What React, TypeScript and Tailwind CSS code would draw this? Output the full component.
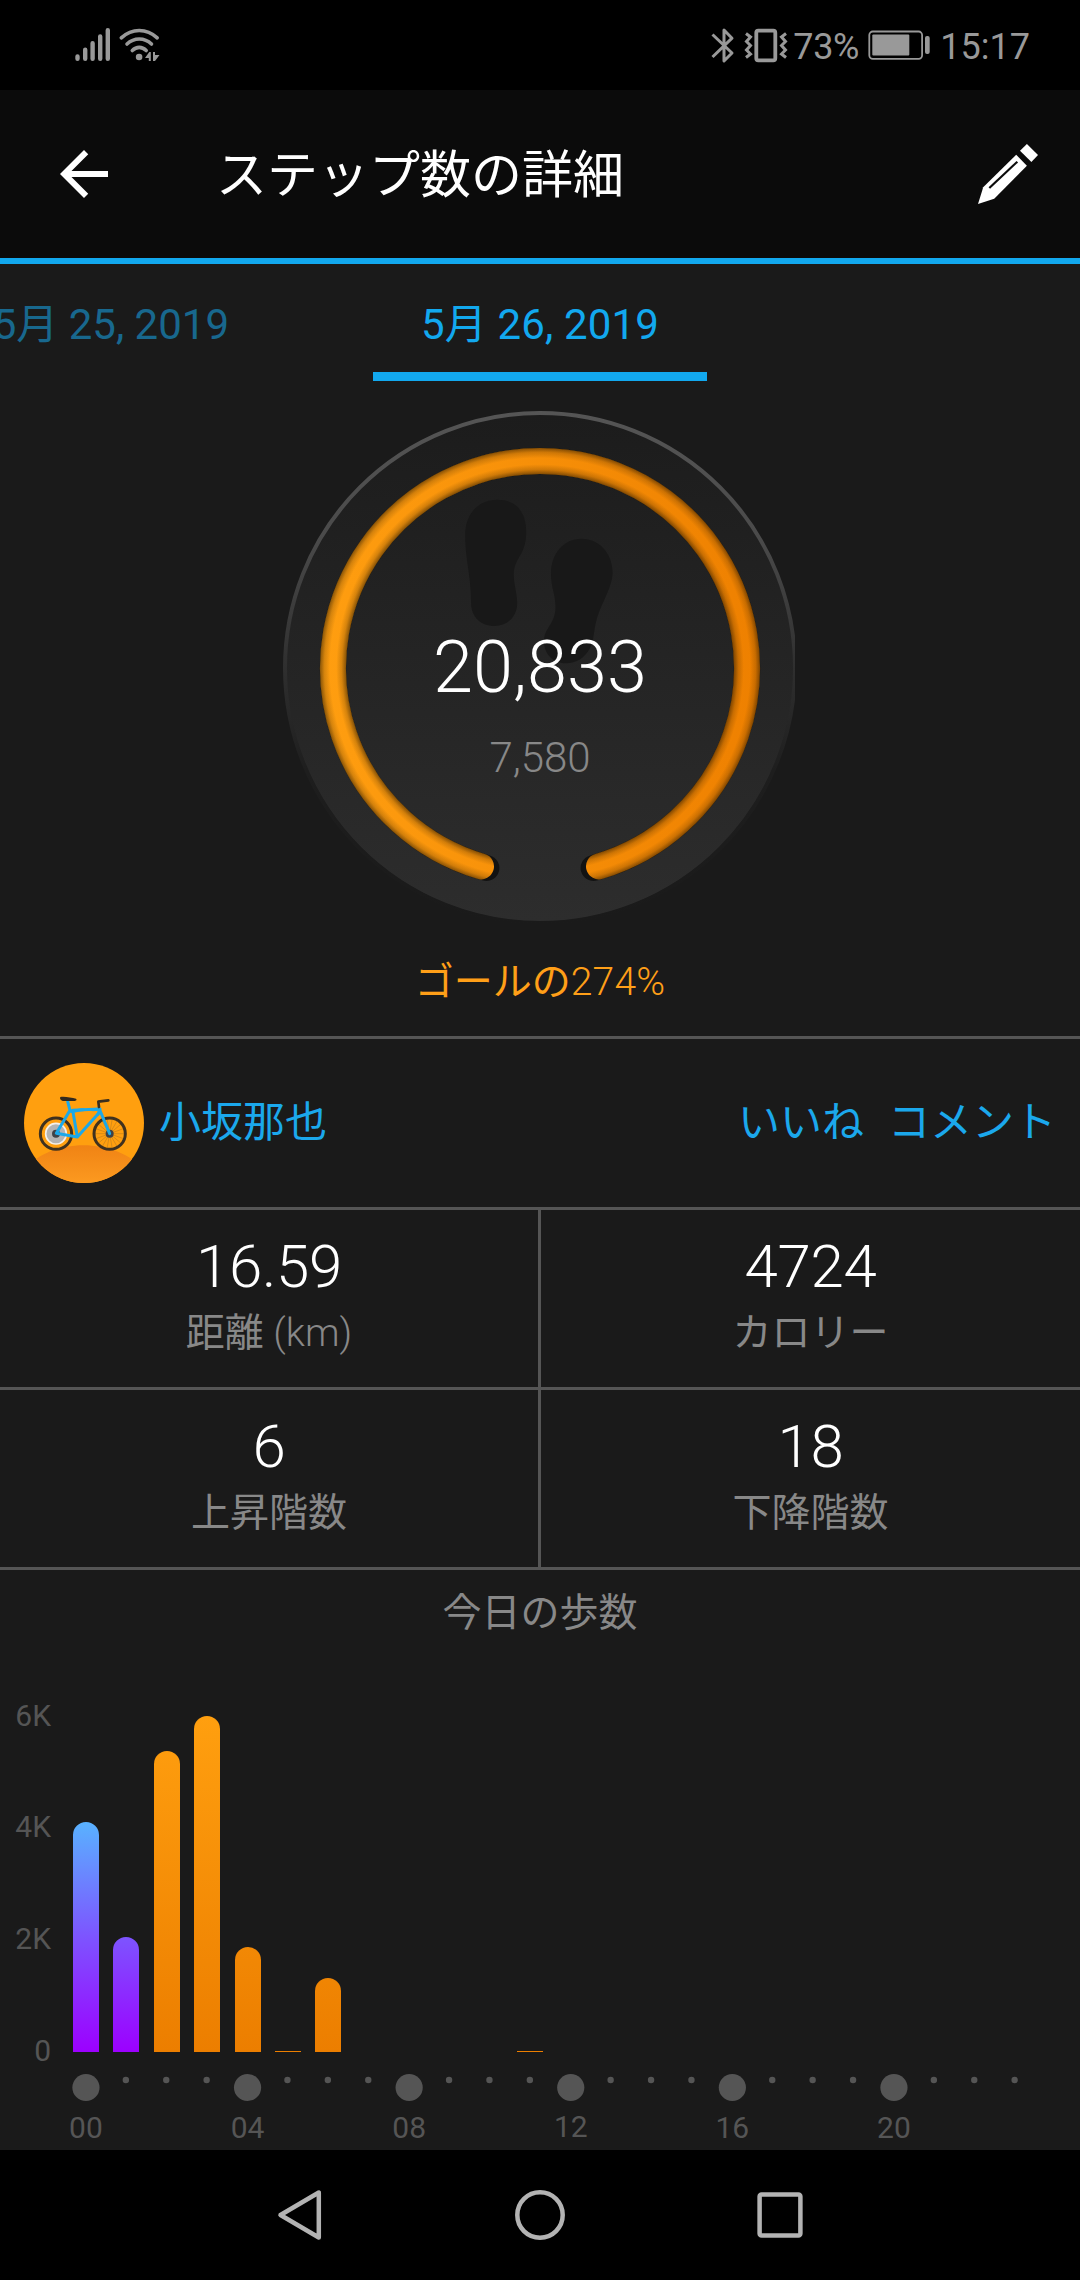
const STEPS_PER_PX = 6000 / 336;
const BASELINE = 2052;
const FIRST_X = 85.95;
const PITCH = 40.4;

const bars = [
  { hour: 0, steps: 4107, night: true },
  { hour: 1, steps: 2054, night: true },
  { hour: 2, steps: 5375, night: false },
  { hour: 3, steps: 6000, night: false },
  { hour: 4, steps: 1875, night: false },
  { hour: 5, steps: 18, night: false },
  { hour: 6, steps: 1321, night: false },
  { hour: 11, steps: 18, night: false },
];

function barPath(hour: number, steps: number) {
  const x = Math.round(FIRST_X + hour * PITCH - 13);
  const h = steps / STEPS_PER_PX;
  const top = BASELINE - h;
  const r = Math.min(13, h / 2);
  if (h < 4) return `M${x} ${BASELINE}V${top}H${x + 26}V${BASELINE}Z`;
  return `M${x} ${BASELINE}V${top + r}A13 ${r} 0 0 1 ${x + 26} ${top + r}V${BASELINE}Z`;
}

function StatusBar() {
  return (
    <div className="flex h-[90px] items-center bg-black pr-[50px] pl-[75px] text-[#999]">
      <svg width="86" height="40" viewBox="75 25 86 40" fill="none" stroke="currentColor" strokeLinecap="round">
        <g strokeWidth="4.400">
          <path d="M77.500 56.400V58.800M85.200 49.800V58.800M92.600 43.200V58.800M100.200 36.400V58.800M107.800 30.200V58.800" />
        </g>
        <g strokeWidth="3.600">
          <path d="M121.300 37.800C132 28 146.500 28 157.200 37.800" />
          <path d="M127 44C134 37.300 144.500 37.300 151.500 44" />
          <path d="M132.300 50.500C136.500 46.300 142 46.300 146.200 50.500" />
        </g>
        <circle cx="139.100" cy="57" r="3.300" fill="currentColor" stroke="none" />
        <path d="M145 58L149.300 52H150.800V61H148.800V58ZM153 61V52H155V55H159.500L155 61Z" fill="currentColor" stroke="none" />
      </svg>
      <div className="flex-1" />
      <svg width="77" height="40" viewBox="711 25 77 40" fill="none" stroke="currentColor">
        <path d="M712.500 34.500L732 53L724 61V30L732 38.200L712.500 57" strokeWidth="3" strokeLinejoin="round" />
        <rect x="756.300" y="30.700" width="19" height="29.600" rx="2" strokeWidth="3.800" />
        <path d="M746 33.500L750.500 37L746.500 41.500L750.500 45.500L746.500 50L750.500 54L746 57.500M786 33.500L781.500 37L785.500 41.500L781.500 45.500L785.500 50L781.500 54L786 57.500" strokeWidth="3" />
      </svg>
      <span className="ml-[5px] w-[67px] pt-[4px] text-[36px] leading-[40px] tracking-[-0.4px]">73%</span>
      <svg className="ml-[8px]" width="63" height="40" viewBox="868 25.500 63 40" fill="none" stroke="currentColor">
        <rect x="869.300" y="32" width="52.800" height="27.300" rx="3.500" strokeWidth="1.800" />
        <rect x="872.300" y="35" width="37" height="21" rx="1" fill="currentColor" stroke="none" />
        <rect x="925" y="36.500" width="4.700" height="18" rx="2" fill="currentColor" stroke="none" />
      </svg>
      <span className="ml-[9px] pt-[4px] text-[36px] leading-[40px]">15:17</span>
    </div>
  );
}

function Header() {
  return (
    <header className="flex h-[174px] items-center border-b-[6px] border-[#12a8ee] bg-[#0b0b0b] pr-[42px] pl-12 text-white">
      <svg width="72" height="72" viewBox="0 0 24 24" fill="currentColor">
        <path d="M20 11H7.830l5.590-5.590L12 4l-8 8 8 8 1.410-1.410L7.830 13H20v-2z" />
      </svg>
      <h1 className="ml-[96px] flex-1 pt-[3px] text-[51px] leading-[60px]">ステップ数の詳細</h1>
      <svg width="60" height="60" viewBox="978 144 60 60" fill="currentColor">
        <path d="M1026.900 144L1038 155L1031.400 162L1020 150.700Z" />
        <path d="M1016.200 154.700L1026.900 165.700L994.200 198.700L978 204L983.200 187.300Z" />
        <path d="M989.300 188L1017.300 161.700" stroke="#0b0b0b" strokeWidth="2.200" />
      </svg>
    </header>
  );
}

function DateTabs() {
  return (
    <nav className="grid h-[117px] grid-cols-[373px_334px_373px] text-[42px] leading-[60px] whitespace-nowrap text-[#12a8ee]">
      <div className="flex h-[108px] items-center justify-end pt-[14px] pr-[144px] text-[#18688e]">
        <span>5月 25, 2019</span>
      </div>
      <div className="flex h-[117px] items-center justify-center border-b-[9px] border-[#12a8ee] pt-[14px]">
        <span className="tracking-[0.15px]">5月 26, 2019</span>
      </div>
    </nav>
  );
}

function Gauge() {
  const arc = "M599 866.400A207 207 0 1 0 481 866.400";
  return (
    <section className="flex h-[655px] flex-col items-center pt-[27px]">
      <div className="grid h-[520px] w-[520px]">
        <svg className="col-start-1 row-start-1" width="520" height="520" viewBox="280 408 520 520" fill="none">
          <defs>
            <clipPath id="dial">
              <rect x="280" y="408" width="515" height="520" />
            </clipPath>
            <linearGradient id="disc" x1="0" y1="0" x2="0" y2="1">
              <stop offset="0" stopColor="#1c1c1c" />
              <stop offset="1" stopColor="#2d2d2d" />
            </linearGradient>
            <linearGradient id="rim" x1="0" y1="411" x2="0" y2="925" gradientUnits="userSpaceOnUse">
              <stop offset="0" stopColor="#555" />
              <stop offset="0.250" stopColor="#4a4a4a" />
              <stop offset="0.500" stopColor="#2f2f2f" />
              <stop offset="0.700" stopColor="#1e1e1e" />
              <stop offset="1" stopColor="#1a1a1a" />
            </linearGradient>
            <linearGradient id="ring" x1="320" y1="0" x2="760" y2="0" gradientUnits="userSpaceOnUse">
              <stop offset="0" stopColor="#ff9e10" />
              <stop offset="1" stopColor="#ee8000" />
            </linearGradient>
            <radialGradient id="shade" cx="540" cy="668" r="220.500" gradientUnits="userSpaceOnUse">
              <stop offset="0.878" stopColor="#1a1000" stopOpacity="0.550" />
              <stop offset="0.900" stopColor="#1a1000" stopOpacity="0.180" />
              <stop offset="0.924" stopColor="#1a1000" stopOpacity="0" />
              <stop offset="0.952" stopColor="#1a1000" stopOpacity="0" />
              <stop offset="0.978" stopColor="#1a1000" stopOpacity="0.180" />
              <stop offset="1" stopColor="#1a1000" stopOpacity="0.550" />
            </radialGradient>
          </defs>
          <g clipPath="url(#dial)">
            <circle cx="540" cy="668" r="253.500" fill="url(#disc)" />
            <circle cx="540" cy="668" r="255" stroke="url(#rim)" strokeWidth="4" />
          </g>
          <path d="M593.600 868A207 207 0 1 0 486.400 868" stroke="#121212" strokeWidth="26" strokeLinecap="round" />
          <path d={arc} stroke="url(#ring)" strokeWidth="26" strokeLinecap="round" />
          <path d={arc} stroke="url(#shade)" strokeWidth="26.500" strokeLinecap="round" />
          <g fill="#181818">
            <path d="M497.300 499.700C516 499.700 526.200 512 526.200 532C526.200 556 513.800 557 513.800 575C513.800 585 517.200 593 517.200 603C517.200 617 507 626 494.500 626C481 626 471.100 617 471.100 603C471.100 575 465.200 560 465.200 535C465.200 513 479 499.700 497.300 499.700Z" />
            <path d="M581.600 538.700C599 538.700 612.600 553 612.600 573C612.600 586 602 602 597 618C593 632 594.500 640 590 648C585 658 576 663.300 566 663.300C553 663.300 544 654 544 641C544 628 555.500 624 555.500 607C555.500 594 551 588 551 574C551 553 564 538.700 581.600 538.700Z" />
          </g>
        </svg>
        <div className="relative col-start-1 row-start-1 flex flex-col items-center pt-[224px] font-light">
          <span className="text-[72px] leading-[72px] tracking-[0.1px] text-white">20,833</span>
          <span className="mt-[33px] text-[42px] leading-[42px] text-[#888]">7,580</span>
        </div>
      </div>
      <p className="mt-[34px] text-[39px] leading-[40px] text-[#ff9f18]">
        ゴールの<span className="font-light tracking-[0.2px]">274%</span>
      </p>
    </section>
  );
}

function Avatar() {
  const spokes = Array.from({ length: 9 }, (_, i) => i * 20);
  return (
    <svg width="120" height="120" viewBox="72 98 360 360" fill="none">
      <defs>
        <clipPath id="avatar">
          <circle cx="252" cy="278" r="180" />
        </clipPath>
        <linearGradient id="hill" x1="0" y1="0" x2="0" y2="1">
          <stop offset="0" stopColor="#f08314" />
          <stop offset="1" stopColor="#fc9a20" />
        </linearGradient>
      </defs>
      <g clipPath="url(#avatar)">
        <rect x="72" y="98" width="360" height="360" fill="#ff9f0f" />
        <path d="M72 420C150 320 350 320 432 420V460H72Z" fill="url(#hill)" />
      </g>
      <circle cx="168" cy="310" r="31" fill="#b4b4b4" stroke="#f4f0ea" strokeWidth="5" />
      <g stroke="#b67a20" strokeWidth="1.500">
        {spokes.map((a) => (
          <path key={a} d="M285 310H373" transform={`rotate(${a} 329 310)`} />
        ))}
      </g>
      <g stroke="#3f311f" strokeWidth="9">
        <circle cx="168" cy="310" r="47" />
        <circle cx="329" cy="310" r="47" />
      </g>
      <circle cx="168" cy="310" r="12" fill="#3f4247" />
      <circle cx="329" cy="310" r="12" fill="#3f4247" />
      <g stroke="#1ca8e8" strokeWidth="9" strokeLinejoin="round" strokeLinecap="round">
        <path d="M203 213L210 240L169 309L232 320L218 240L298 236L329 310M232 320L300 244" />
        <path d="M212 243C225 245 235 237 250 238M278 238L300 236L294 252" />
      </g>
      <path d="M181 200C192 197 215 202 228 205C232 208 228 212 222 212H192C184 212 178 206 181 200Z" fill="#32291e" />
      <path d="M297 230L295 214L325 210" stroke="#3a2e1e" strokeWidth="8" strokeLinejoin="round" strokeLinecap="round" />
    </svg>
  );
}

function Stat({ value, label, unit }: { value: string; label: string; unit?: string }) {
  return (
    <div className="flex h-[177px] flex-col items-center pt-[27px]">
      <span className="text-[60px] leading-[60px] font-light tracking-[-0.3px] text-white">{value}</span>
      <span className="mt-[16px] text-[39px] leading-[40px] text-[#888]">
        {label}
        {unit && <span className="font-light"> ({unit})</span>}
      </span>
    </div>
  );
}

function StepsChart() {
  return (
    <svg className="block" width="1080" height="517" viewBox="0 1633 1080 517" fontSize="30" fill="#555">
      <defs>
        <linearGradient id="day" x1="0" y1="1716" x2="0" y2="2052" gradientUnits="userSpaceOnUse">
          <stop offset="0" stopColor="#ff9f0f" />
          <stop offset="1" stopColor="#ec7e00" />
        </linearGradient>
        <linearGradient id="night" x1="0" y1="1822" x2="0" y2="2052" gradientUnits="userSpaceOnUse">
          <stop offset="0" stopColor="#59b2ff" />
          <stop offset="0.500" stopColor="#7d54ff" />
          <stop offset="1" stopColor="#9c00ff" />
        </linearGradient>
      </defs>
      <g textAnchor="end">
        <text x="51" y="1726">6K</text>
        <text x="51" y="1837">4K</text>
        <text x="51" y="1949">2K</text>
        <text x="51" y="2061">0</text>
      </g>
      {bars.map((b) => (
        <path key={b.hour} d={barPath(b.hour, b.steps)} fill={b.night ? "url(#night)" : "url(#day)"} />
      ))}
      {Array.from({ length: 24 }, (_, hour) => {
        const x = FIRST_X + hour * PITCH;
        return hour % 4 === 0 ? (
          <g key={hour}>
            <circle cx={x} cy="2087.500" r="13.600" />
            <text x={x} y={hour === 12 ? 2137 : 2138} textAnchor="middle">
              {String(hour).padStart(2, "0")}
            </text>
          </g>
        ) : (
          <circle key={hour} cx={x - 0.5} cy="2080" r="3.200" />
        );
      })}
    </svg>
  );
}

function NavigationBar() {
  return (
    <div className="grid h-[130px] grid-cols-[240px_240px_240px] place-content-center place-items-center bg-black text-[#b3b3b3]">
      <svg width="60" height="60" viewBox="0 0 60 60" fill="none" stroke="currentColor" strokeWidth="4.500" strokeLinejoin="round">
        <path d="M10.500 30L48.800 7.500V52.500Z" />
      </svg>
      <svg width="60" height="60" viewBox="0 0 60 60" fill="none" stroke="currentColor" strokeWidth="4.500">
        <circle cx="30" cy="30" r="22.700" />
      </svg>
      <svg width="60" height="60" viewBox="0 0 60 60" fill="none" stroke="currentColor" strokeWidth="4.500">
        <rect x="9.600" y="9.600" width="40.800" height="40.800" rx="2" />
      </svg>
    </div>
  );
}

export default function App() {
  return (
    <div
      lang="ja"
      className="flex h-[2280px] w-[1080px] flex-col overflow-hidden bg-[#1a1a1a] font-['Roboto','Noto_Sans_CJK_JP',sans-serif]"
    >
      <StatusBar />
      <Header />
      <DateTabs />
      <Gauge />
      <section className="flex h-[171px] items-center border-t-[3px] border-[#555] px-6 text-[42px] leading-[48px] text-[#1ba8ec]">
        <Avatar />
        <span className="ml-[15px] flex-1">小坂那也</span>
        <span>いいね</span>
        <span className="ml-[24px]">コメント</span>
      </section>
      <section className="grid grid-cols-[538px_3px_539px] border-t-[3px] border-[#555]">
        <Stat value="16.59" label="距離" unit="km" />
        <div className="bg-[#555]" />
        <Stat value="4724" label="カロリー" />
      </section>
      <section className="grid grid-cols-[538px_3px_539px] border-y-[3px] border-[#555]">
        <Stat value="6" label="上昇階数" />
        <div className="bg-[#555]" />
        <Stat value="18" label="下降階数" />
      </section>
      <h2 className="h-[63px] pt-[23px] text-center text-[39px] leading-[40px] text-[#888]">今日の歩数</h2>
      <StepsChart />
      <NavigationBar />
    </div>
  );
}
